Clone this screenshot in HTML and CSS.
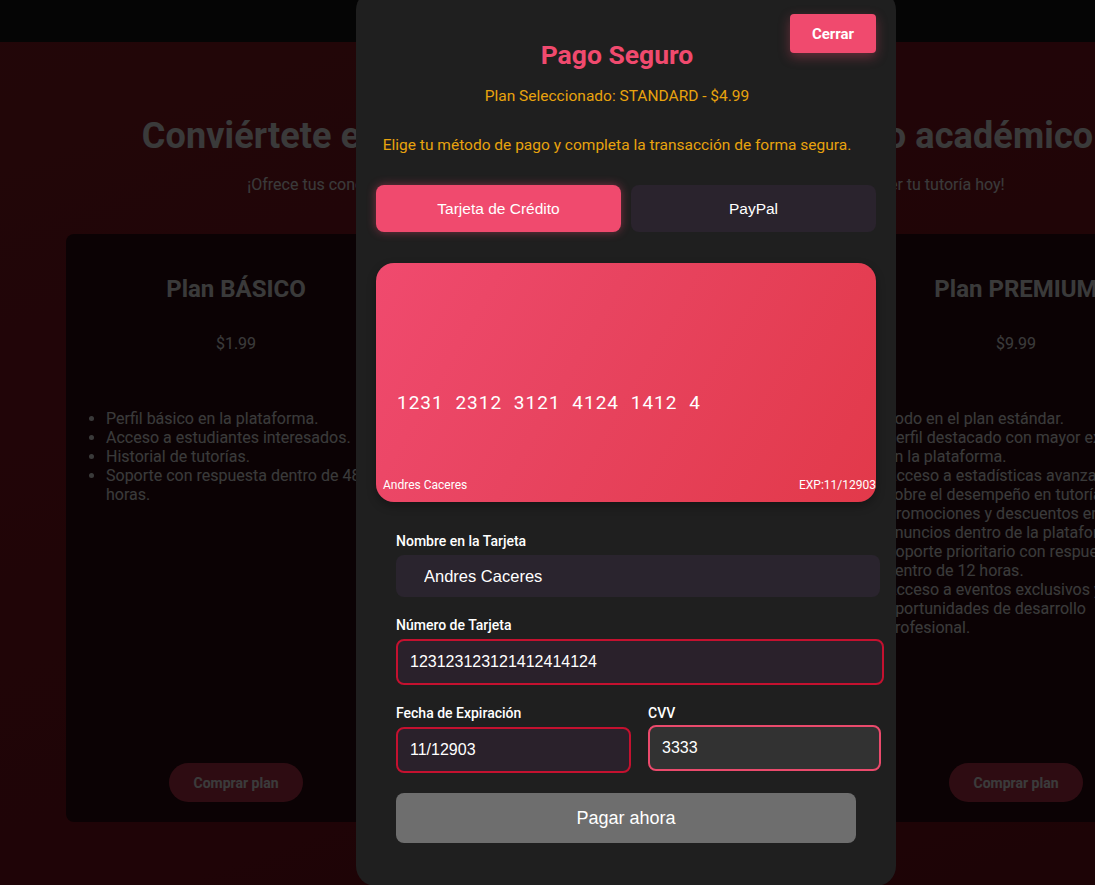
FILE: index.html
```html
<!DOCTYPE html>
<html lang="es">
<head>
<meta charset="utf-8">
<title>Planes de tutoría</title>
<link rel="stylesheet" href="styles.css">
</head>
<body>
<div class="page">
  <header class="topbar"></header>
  <main class="hero">
    <h1 class="hero-title">Conviértete en un tutor y potencia el desarrollo académico</h1>
    <p class="hero-sub">¡Ofrece tus conocimientos, ayuda a otros estudiantes y elige el plan más acorde para ofrecer tu tutoría hoy!</p>
    <section class="plans">
      <article class="plan">
        <h3 class="plan-name">Plan BÁSICO</h3>
        <p class="plan-price">$1.99</p>
        <ul class="plan-list">
          <li>Perfil básico en la plataforma.</li>
          <li>Acceso a estudiantes interesados.</li>
          <li>Historial de tutorías.</li>
          <li>Soporte con respuesta dentro de 48 horas.</li>
        </ul>
        <button class="plan-btn">Comprar plan</button>
      </article>
      <article class="plan">
        <h3 class="plan-name">Plan STANDARD</h3>
        <p class="plan-price">$4.99</p>
        <ul class="plan-list">
          <li>Todo en el plan básico.</li>
          <li>Perfil destacado en búsquedas.</li>
          <li>Acceso a estadísticas de tutorías.</li>
          <li>Soporte con respuesta dentro de 24 horas.</li>
        </ul>
        <button class="plan-btn">Comprar plan</button>
      </article>
      <article class="plan">
        <h3 class="plan-name">Plan PREMIUM</h3>
        <p class="plan-price">$9.99</p>
        <ul class="plan-list">
          <li>Todo en el plan estándar.</li>
          <li>Perfil destacado con mayor exposición en la plataforma.</li>
          <li>Acceso a estadísticas avanzadas sobre el desempeño en tutorías.</li>
          <li>Promociones y descuentos en anuncios dentro de la plataforma.</li>
          <li>Soporte prioritario con respuesta dentro de 12 horas.</li>
          <li>Acceso a eventos exclusivos y oportunidades de desarrollo profesional.</li>
        </ul>
        <button class="plan-btn">Comprar plan</button>
      </article>
    </section>
  </main>

  <div class="overlay">
    <div class="modal">
      <button class="close-btn">Cerrar</button>
      <div class="modal-head">
        <h2 class="modal-title">Pago Seguro</h2>
        <p class="modal-plan">Plan Seleccionado: STANDARD - $4.99</p>
        <p class="modal-desc">Elige tu método de pago y completa la transacción de forma segura.</p>
      </div>
      <div class="tabs">
        <button class="tab tab-active">Tarjeta de Crédito</button>
        <button class="tab">PayPal</button>
      </div>
      <div class="card">
        <div class="card-number">1231 2312 3121 4124 1412 4</div>
        <div class="card-foot">
          <span>Andres Caceres</span>
          <span>EXP:11/12903</span>
        </div>
      </div>
      <form class="form">
        <label class="label">Nombre en la Tarjeta</label>
        <input class="input input-name" type="text" value="Andres Caceres">
        <label class="label label-gap">Número de Tarjeta</label>
        <input class="input input-bordered input-number" type="text" value="123123123121412414124">
        <div class="row">
          <div class="col">
            <label class="label">Fecha de Expiración</label>
            <input class="input input-bordered input-exp" type="text" value="11/12903">
          </div>
          <div class="col">
            <label class="label">CVV</label>
            <input class="input input-cvv" type="text" value="3333">
          </div>
        </div>
        <button class="pay-btn" type="button">Pagar ahora</button>
      </form>
    </div>
  </div>
</div>
</body>
</html>
```

FILE: styles.css
```css
html, body {
  margin: 0;
  padding: 0;
  overflow: hidden;
  background: #0a0204;
}

body {
  font-family: Roboto, "Liberation Sans", sans-serif;
}

.page {
  position: relative;
  width: 1252px;
  height: 885px;
  background: linear-gradient(160deg, #881a24 0%, #80141e 50%, #741019 100%);
}

.topbar {
  height: 42px;
  background: #161616;
}

.hero {
  text-align: center;
  color: #e8e8e8;
}

.hero-title {
  margin: 73px 0 0;
  padding-right: 17px;
  font-size: 36px;
  line-height: 42px;
  font-weight: 700;
  letter-spacing: 0.12px;
  white-space: nowrap;
}

.hero-sub {
  margin: 18px 0 0;
  font-size: 16px;
  line-height: 19px;
  white-space: nowrap;
}

.plans {
  display: grid;
  grid-template-columns: repeat(3, 340px);
  column-gap: 50px;
  justify-content: center;
  margin-top: 40px;
}

.plan {
  height: 588px;
  box-sizing: border-box;
  background: #2c0810;
  border-radius: 8px;
  padding: 41px 20px 20px;
  display: flex;
  flex-direction: column;
  align-items: center;
}

.plan-name {
  margin: 0;
  font-size: 24px;
  line-height: 28px;
  font-weight: 700;
}

.plan-price {
  margin: 31px 0 0;
  font-size: 16px;
  line-height: 19px;
}

.plan-list {
  align-self: stretch;
  text-align: left;
  margin: 56px 0 0;
  padding-left: 20px;
  font-size: 16px;
  line-height: 19px;
}

.plan-btn {
  margin-top: auto;
  border: none;
  background: #b83048;
  color: #ececec;
  font-family: Roboto, sans-serif;
  font-weight: 700;
  font-size: 14px;
  height: 39px;
  width: 134px;
  border-radius: 20px;
}

.overlay {
  position: absolute;
  inset: 0;
  background: rgba(0, 0, 0, 0.75);
  display: flex;
  justify-content: center;
  align-items: flex-start;
}

.modal {
  position: relative;
  margin-top: -10px;
  width: 540px;
  box-sizing: border-box;
  padding: 20px 20px 43px;
  background: #1f1f1f;
  border-radius: 20px;
  text-align: center;
}

.modal-head {
  padding-right: 18px;
}

.close-btn {
  position: absolute;
  top: 24px;
  right: 20px;
  width: 86px;
  height: 39px;
  border: none;
  border-radius: 4px;
  background: #f04a6e;
  color: #fff;
  font-family: Roboto, sans-serif;
  font-weight: 700;
  font-size: 15px;
  box-shadow: 0 4px 12px rgba(240, 74, 110, 0.35);
}

.modal-title {
  margin: 0;
  padding-top: 28px;
  font-size: 26.5px;
  line-height: 33px;
  font-weight: 700;
  color: #f04a6e;
}

.modal-plan {
  margin: 16px 0 0;
  font-size: 15.5px;
  line-height: 18px;
  color: #e8a30e;
}

.modal-desc {
  margin: 31px 0 0;
  font-size: 15.5px;
  line-height: 19px;
  color: #e8a30e;
}

.tabs {
  display: grid;
  grid-template-columns: 1fr 1fr;
  gap: 10px;
  margin-top: 30px;
}

.tab {
  height: 47px;
  border: none;
  border-radius: 8px;
  background: #2a232d;
  color: #fff;
  font-family: "Liberation Sans", Arial, sans-serif;
  font-size: 15.5px;
}

.tab-active {
  background: #f04a6e;
  box-shadow: 0 0 10px rgba(240, 74, 110, 0.45);
}

.card {
  margin-top: 31px;
  height: 239px;
  border-radius: 18px;
  background: linear-gradient(120deg, #f04a6e 0%, #e84460 40%, #e2394a 100%);
  color: #fff;
  display: flex;
  flex-direction: column;
  text-align: left;
  box-shadow: 0 4px 10px rgba(0, 0, 0, 0.3);
}

.card-number {
  margin-top: 128px;
  padding-left: 21px;
  font-size: 19px;
  line-height: 24px;
  font-weight: 400;
  letter-spacing: 1px;
  word-spacing: 6px;
}

.card-foot {
  margin-top: auto;
  display: flex;
  justify-content: space-between;
  padding: 0 0 9px 7px;
  font-size: 12px;
  line-height: 15px;
  font-weight: 400;
}

.form {
  padding: 0 20px;
  text-align: left;
  margin-top: 31px;
}

.label {
  display: block;
  color: #fff;
  font-size: 14px;
  line-height: 16px;
  font-weight: 500;
}

.label-gap {
  margin-top: 20px;
}

.input {
  display: block;
  box-sizing: border-box;
  margin-top: 6px;
  height: 46px;
  border: none;
  border-radius: 8px;
  color: #fff;
  font-family: "Liberation Sans", Arial, sans-serif;
  font-size: 16px;
  outline: none;
}

.input-name {
  width: 484px;
  height: 42px;
  padding: 0 0 0 28px;
  background: #2a242e;
  font-size: 16.5px;
}

.input-bordered {
  border: 2px solid #c4112f;
  background: #2a212b;
  padding: 0 12px;
}

.input-number {
  width: 488px;
}

.row {
  display: grid;
  grid-template-columns: 235px 233px;
  column-gap: 17px;
  margin-top: 20px;
}

.input-exp {
  width: 235px;
}

.input-cvv {
  width: 233px;
  margin-top: 4px;
  border: 2px solid #ea4a6c;
  background: #323232;
  padding: 0 12px;
}

.pay-btn {
  display: block;
  margin-top: 20px;
  width: 460px;
  height: 50px;
  border: none;
  border-radius: 8px;
  background: #6e6e6e;
  color: #fff;
  font-family: "Liberation Sans", Arial, sans-serif;
  font-size: 18px;
}
```
